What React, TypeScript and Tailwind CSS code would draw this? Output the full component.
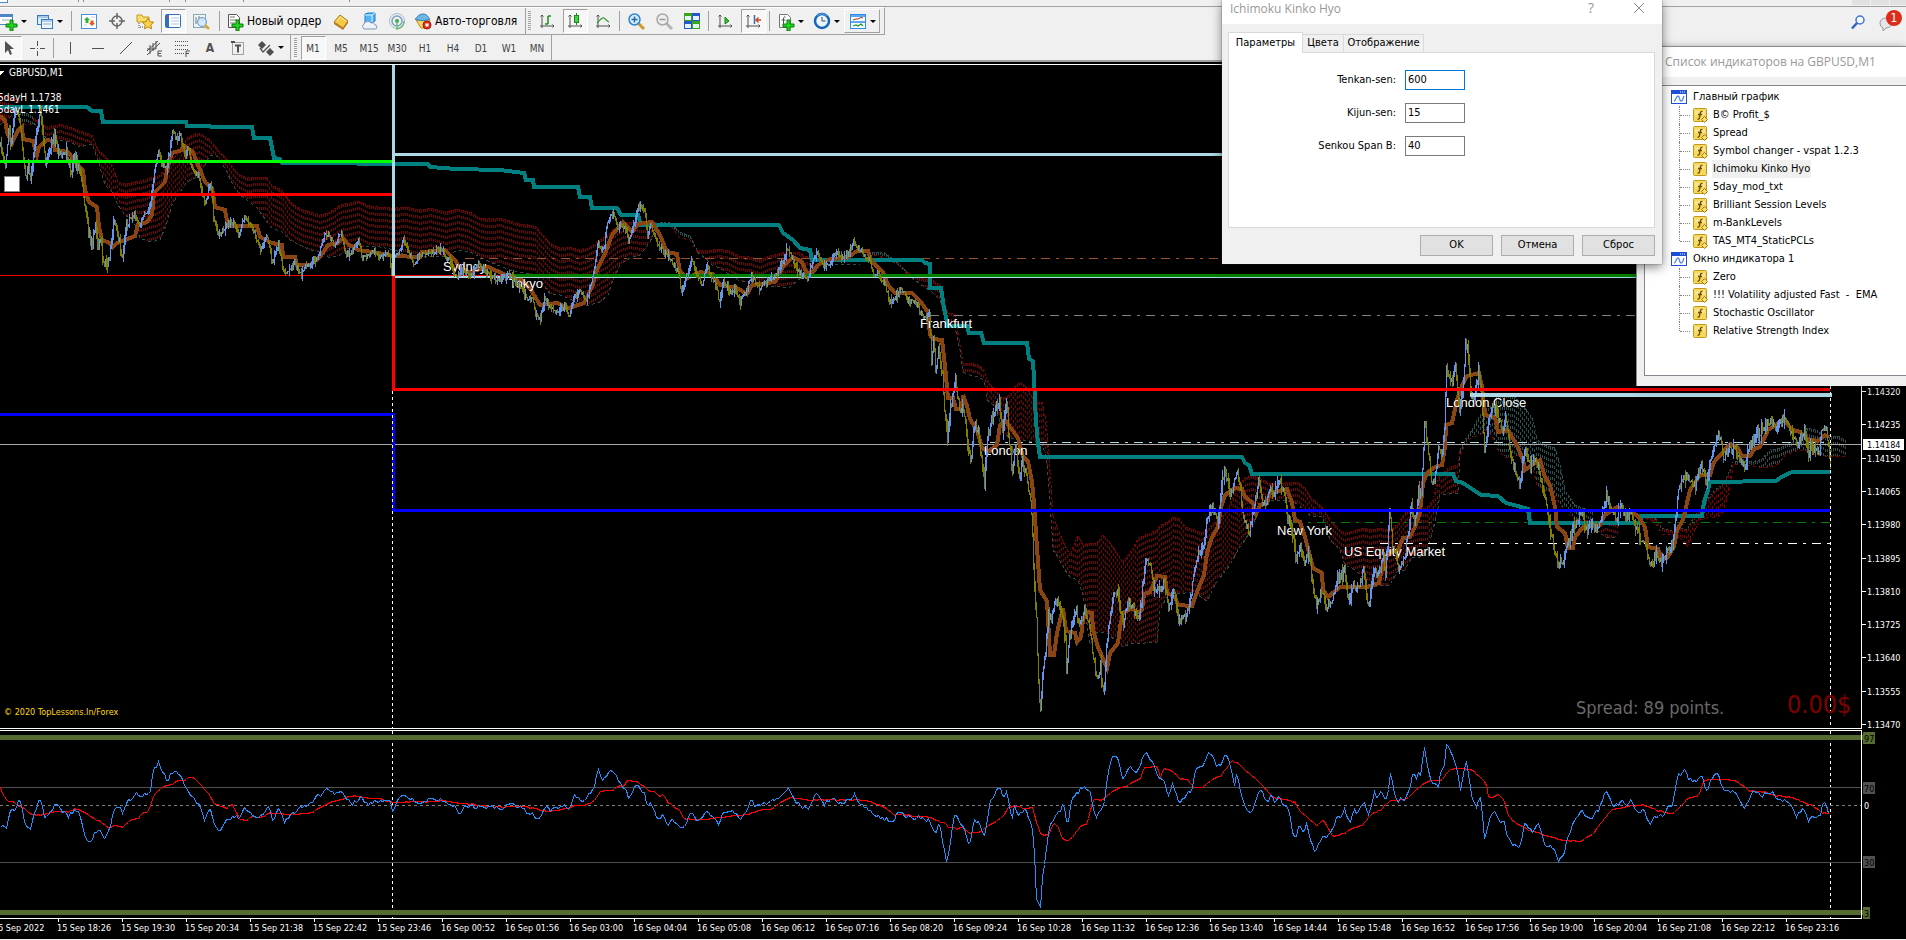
import React from "react";

// ---------------------------------------------------------------- chart data

const TENKAN =
  "0,107 87,107 92,111 101,111 103,122 186,122 187,126 210,126 211,127 252,127 254,138 270,138 274,158 280,159 282,163 428,164 430,167 456,169 500,170 524,173 526,180 533,180 534,187 578,187 580,197 590,197 592,208 617,208 621,215 638,215 641,225 779,225 783,233 793,240 800,248 810,250 812,260 922,260 925,263 930,264 930,288 941,288 944,308 947,322 947,326 967,326 969,333 981,333 984,343 1027,343 1029,359 1033,361 1034,378 1036,422 1038,443 1040,457 1242,457 1245,463 1249,465 1252,474 1453,474 1456,481 1463,483 1481,495 1498,496 1506,503 1518,506 1528,509 1530,523 1640,523 1641,516 1702,516 1704,502 1708,490 1710,482 1776,481 1780,478 1792,472 1831,472";

const KIJUN =
  "0,116 5,120 7,132 12,143 18,130 22,127 23,139 33,141 37,155 39,147 47,140 53,141 55,150 68,152 78,165 83,170 85,190 89,202 97,207 99,227 102,240 110,243 113,247 117,243 125,240 135,236 138,225 147,222 152,215 154,193 165,182 167,170 172,153 182,150 183,145 193,152 200,170 205,182 212,188 215,207 225,210 228,226 257,226 260,237 272,243 282,245 283,257 295,257 297,265 310,265 320,257 328,245 338,243 343,238 348,244 358,250 373,252 393,256 420,257 422,252 445,250 455,260 459,267 469,272 488,267 506,275 522,280 531,290 540,305 557,303 569,308 584,303 592,287 598,267 605,254 608,246 612,235 623,222 632,232 638,224 652,222 660,235 667,252 677,254 680,272 688,278 700,272 713,274 720,285 737,288 747,294 752,285 775,282 783,267 793,257 802,262 807,274 813,272 818,265 830,259 847,258 857,251 868,251 872,262 883,272 888,285 895,293 912,293 920,301 928,312 930,335 933,339 942,340 945,366 948,398 953,398 956,409 962,408 963,395 967,406 970,419 977,430 982,448 988,452 997,445 1000,425 1005,420 1010,427 1018,438 1023,457 1028,461 1032,482 1034,503 1037,548 1040,590 1047,601 1049,636 1050,655 1054,655 1057,633 1063,608 1066,631 1075,633 1077,642 1081,637 1083,620 1087,612 1092,613 1093,630 1098,647 1107,668 1110,653 1118,643 1120,627 1123,613 1132,608 1137,613 1142,610 1144,594 1150,592 1157,576 1165,577 1167,593 1175,597 1178,605 1192,606 1194,600 1199,587 1204,575 1207,553 1212,537 1218,527 1221,507 1225,495 1235,488 1242,489 1245,497 1253,503 1256,514 1260,505 1267,503 1270,493 1287,489 1292,503 1295,520 1300,522 1305,537 1313,568 1322,573 1323,590 1328,597 1340,587 1367,587 1379,583 1382,568 1388,553 1398,550 1403,538 1410,537 1415,527 1420,512 1423,483 1427,473 1435,467 1442,465 1445,447 1446,425 1452,423 1457,400 1463,383 1467,376 1479,373 1482,387 1485,415 1495,417 1498,432 1508,430 1512,437 1517,445 1523,460 1525,470 1532,465 1540,460 1545,477 1550,485 1555,507 1557,527 1565,533 1568,548 1573,548 1575,537 1583,527 1600,525 1605,515 1617,507 1627,512 1637,515 1645,527 1648,547 1658,549 1662,559 1667,558 1674,547 1677,530 1683,520 1690,490 1700,475 1710,475 1714,462 1723,452 1730,444 1737,447 1742,456 1750,456 1754,449 1760,447 1768,430 1783,420 1793,430 1800,432 1807,439 1818,441 1825,435 1829,437";

const PRICE =
  "0,145 2,158 5,165 8,130 11,145 14,112 17,110 19,118 22,150 25,178 28,165 30,178 34,150 37,125 40,115 43,140 45,165 49,150 54,136 58,152 62,158 66,150 70,172 74,158 80,172 83,195 86,215 88,232 92,245 95,220 97,245 100,238 103,262 106,265 109,258 111,235 114,222 118,238 122,255 126,225 130,218 134,212 139,228 143,215 148,212 152,190 154,170 158,150 162,165 166,168 170,145 172,132 177,138 180,133 184,155 188,148 192,168 198,175 202,195 205,203 208,190 211,185 213,215 218,236 222,230 228,222 233,222 238,235 244,215 248,222 254,232 260,250 266,235 272,262 278,243 283,272 290,270 294,262 300,274 306,265 312,262 318,255 324,235 328,232 333,245 341,233 346,255 352,250 358,240 362,258 368,256 374,250 380,257 388,252 391,270 395,255 400,248 403,240 408,252 413,263 420,254 430,252 440,248 450,262 456,278 460,270 470,276 478,263 488,275 500,280 510,274 516,282 522,290 528,300 532,296 535,315 540,318 544,298 550,308 556,312 565,305 569,316 573,298 580,290 586,302 590,285 594,265 598,240 600,250 604,245 607,220 613,212 617,228 624,225 628,240 634,222 638,207 641,205 644,208 647,235 650,222 655,240 661,248 667,255 672,262 678,272 681,292 686,275 691,260 697,275 702,285 706,265 712,280 716,285 719,302 723,280 730,292 735,288 740,302 746,290 751,275 758,288 765,283 773,276 778,270 782,262 787,248 792,258 797,270 802,275 807,280 812,262 817,250 823,265 830,262 836,252 843,258 849,252 853,240 858,248 865,256 870,260 873,275 877,272 884,282 889,302 896,295 901,288 908,300 915,302 920,312 925,318 929,312 931,360 933,335 935,370 938,350 942,372 944,408 947,440 950,408 955,380 958,400 960,410 963,405 967,442 970,460 974,425 978,430 982,465 984,480 987,440 991,420 995,410 999,405 1002,430 1006,400 1008,430 1012,475 1015,445 1019,480 1022,460 1027,480 1031,510 1034,590 1036,620 1038,685 1040,706 1043,670 1046,640 1048,610 1051,620 1055,600 1060,605 1065,640 1066,670 1069,635 1073,618 1076,612 1080,625 1085,608 1089,625 1093,660 1097,680 1100,665 1103,695 1106,650 1109,620 1113,595 1117,593 1120,610 1123,625 1127,600 1132,605 1137,620 1141,600 1144,565 1149,562 1153,585 1160,590 1164,578 1168,610 1173,590 1178,620 1184,618 1190,600 1194,570 1198,555 1203,545 1207,518 1212,505 1217,525 1222,480 1225,470 1230,495 1234,480 1237,470 1241,500 1244,522 1249,530 1254,505 1258,480 1262,505 1266,500 1270,485 1274,495 1278,480 1283,488 1288,520 1292,530 1296,558 1300,545 1304,560 1308,550 1312,580 1316,605 1322,590 1326,605 1331,600 1337,580 1344,570 1348,600 1353,585 1358,590 1363,570 1368,605 1373,570 1378,575 1383,555 1385,580 1389,508 1392,545 1398,565 1403,560 1407,540 1411,505 1414,525 1418,490 1421,495 1424,422 1427,440 1430,475 1434,485 1438,450 1441,455 1444,430 1446,365 1449,375 1452,380 1455,368 1459,410 1463,380 1465,342 1468,355 1470,390 1474,400 1478,372 1481,390 1484,455 1488,420 1493,405 1498,418 1502,430 1505,418 1510,455 1515,470 1519,485 1524,450 1529,465 1536,458 1541,480 1545,500 1550,530 1554,550 1558,562 1563,560 1567,545 1571,535 1576,520 1582,512 1586,530 1590,525 1597,530 1602,510 1606,495 1611,510 1616,520 1621,505 1625,520 1630,512 1636,530 1642,540 1647,555 1650,568 1656,552 1661,565 1667,550 1672,545 1675,520 1678,490 1683,475 1689,480 1695,485 1700,465 1706,480 1711,460 1715,440 1719,435 1723,455 1730,450 1734,445 1739,460 1744,468 1749,445 1754,435 1760,432 1766,425 1771,418 1776,428 1782,420 1787,422 1793,440 1799,442 1804,430 1808,450 1814,445 1819,450 1822,425 1826,425 1828,450 1830,460";

// x, upper edge, lower edge
const CLOUDS: { color: string; edges: [string, string]; data: string }[] = [
  { color: "#800000", edges: ["#800000", "#2f4f4f"], data: "0,95,125 8,97,118 18,100,112" },
  { color: "#2f4f4f", edges: ["#2f4f4f", "#800000"], data: "18,112,120 25,113,124 33,116,124" },
  {
    color: "#800000",
    edges: ["#800000", "#2f4f4f"],
    data: "33,118,123 40,122,128 47,127,140 60,124,140 70,127,142 80,131,147 92,135,144 98,150,160 105,156,185 112,165,192 118,182,205 125,184,215 133,182,220 140,181,238 150,178,242 160,175,240 166,168,225 172,158,205 180,150,192 187,138,182 195,134,178 200,133,175 210,140,155 218,150,157 226,158,170 233,168,185 240,175,195 247,178,200 257,177,208 266,177,220 272,185,228 282,190,232 290,202,240 300,209,245 310,212,250 320,215,252 330,212,258 340,205,255 350,203,247 358,201,247 370,206,246 380,207,247 395,208,250 405,207,255 420,210,256 430,208,257 445,212,256 458,209,250 470,212,252 480,218,257 490,219,262 500,218,266 510,221,270 520,224,272 535,226,275 540,232,280 550,243,294 560,248,295 570,247,299 580,250,305 590,247,305 600,240,302 608,235,295 613,230,280 620,225,265 630,222,258 640,224,255 650,224,242 655,222,230",
  },
  { color: "#2f4f4f", edges: ["#2f4f4f", "#800000"], data: "660,222,223 670,223,225 680,232,238 690,236,240 697,250,252" },
  {
    color: "#800000",
    edges: ["#800000", "#2f4f4f"],
    data: "697,250,252 705,251,258 712,250,265 720,249,268 730,251,275 740,256,281 750,257,283 760,260,283 770,256,286 780,253,287 790,252,287 798,252,280 805,256,275 815,258,266 830,258,264 860,258,264",
  },
  { color: "#2f4f4f", edges: ["#2f4f4f", "#800000"], data: "868,252,255 878,252,256 885,253,258 897,262,264 907,272,274" },
  {
    color: "#800000",
    edges: ["#800000", "#2f4f4f"],
    data: "907,272,274 920,278,284 932,280,292 940,285,300 943,300,310 948,313,322 955,314,328 960,345,350 963,363,372 970,363,375 978,365,377 984,370,380 987,380,400 995,390,406 1003,398,432 1010,395,438 1016,385,438 1021,382,440 1027,388,441 1035,402,441 1042,402,445 1046,420,455 1050,470,500 1053,515,550 1058,530,557 1065,545,570 1070,555,577 1078,535,580 1083,545,595 1090,543,645 1097,543,632 1103,535,632 1108,540,634 1115,550,640 1123,562,647 1132,550,643 1138,538,643 1145,535,643 1157,530,642 1160,525,610 1168,522,595 1173,517,594 1180,519,593 1185,527,593 1195,530,592 1202,533,598 1207,530,601 1215,522,585 1222,518,575 1230,505,565 1238,485,550 1245,478,540 1252,476,528 1260,478,505 1268,483,500 1275,485,500 1285,483,500 1298,482,504 1305,488,512 1311,498,516 1322,507,516 1330,520,540 1340,530,550 1345,533,565 1355,530,570 1363,528,578 1370,530,587 1380,528,586 1390,530,585 1397,525,572 1405,513,570 1412,510,557 1420,508,557 1427,508,550 1433,500,530 1438,480,508 1440,475,494 1450,467,494 1458,465,493 1460,450,455",
  },
  {
    color: "#2f4f4f",
    edges: ["#2f4f4f", "#800000"],
    data: "1460,450,455 1465,440,445 1472,430,437 1480,415,435 1485,410,430 1492,405,435 1498,395,450 1505,395,457 1513,396,457 1520,402,455 1528,412,460 1533,420,468 1537,440,485 1545,445,490 1555,448,495 1560,465,505 1565,490,510 1575,505,520 1583,508,520 1593,512,522",
  },
  { color: "#800000", edges: ["#800000", "#2f4f4f"], data: "1597,526,530 1605,522,537 1610,523,538 1617,525,537" },
  {
    color: "#800000",
    edges: ["#2f4f4f", "#800000"],
    data: "1640,514,516 1655,518,522 1662,528,534 1672,531,535 1680,528,538 1687,530,547 1695,515,530 1700,510,520 1707,500,518 1715,490,517 1722,485,515 1728,475,495 1733,462,468",
  },
  {
    color: "#2f4f4f",
    edges: ["#2f4f4f", "#800000"],
    data: "1735,462,465 1742,459,464 1752,462,466 1762,459,468 1770,450,467 1780,448,463 1785,445,455 1800,440,450 1807,428,452 1817,430,455 1825,437,456 1838,436,456 1845,440,457",
  },
];

// Oscillator samples, split in two blocks with their own horizontal scale
const RSI_LEFT =
  "0,415 3,400 9,418 15,365 20,355 25,368 30,320 33,340 40,400 48,420 55,370 65,320 72,380 80,370 90,338 100,360 112,375 120,358 130,370 138,440 145,460 150,455 155,420 163,425 170,448 178,420 182,385 188,350 195,348 200,370 207,335 212,330 220,305 228,322 235,315 245,300 250,232 259,218 264,240 272,272 280,242 292,248 298,275 305,298 315,325 325,342 333,388 343,355 350,410 357,425 368,392 375,390 382,375 390,385 400,350 412,380 420,382 430,370 437,348 445,388 455,352 463,393 475,375 487,352 500,352 510,330 518,318 527,305 536,295 545,310 557,298 565,330 575,338 583,330 590,320 600,345 615,328 625,335 636,330 641,362 648,325 660,318 675,330 685,345 695,330 715,325 725,332 735,340 742,345 750,375 757,348 770,345 775,355 780,340 790,355 803,345 817,358 835,340 845,352 855,348 860,372 868,365 873,390 880,382 890,350 898,360 910,352 920,342 930,355 938,315 950,330 958,322 970,288 976,235 982,272 988,262 993,242 1003,245 1010,275 1018,290 1027,322 1035,288 1043,285 1053,315 1056,345 1062,330 1070,375 1078,380 1083,370 1088,402 1097,392 1105,395 1112,418 1120,395 1128,362 1138,390 1147,385 1155,360 1162,378 1175,402 1180,365 1195,362 1208,382 1217,368 1222,345 1228,328 1233,348 1243,345 1255,335 1268,325 1278,312 1287,295 1295,325 1307,348 1320,350 1333,305 1345,340 1360,325 1375,340 1395,315 1402,340 1412,350 1425,370 1435,380 1447,388 1455,398 1468,362 1478,375 1490,385 1505,380 1512,388 1517,375 1521,430 1524,400 1527,440 1531,405 1535,400 1541,470 1546,517 1552,450 1557,380 1562,368 1567,400";

const RSI_RIGHT =
  "0,410 5,470 11,515 18,430 27,368 32,400 38,405 47,465 55,390 62,388 71,440 76,390 82,325 86,320 90,300 97,292 102,325 108,300 116,390 120,345 128,375 138,352 145,390 152,440 154,600 158,655 160,632 162,660 166,550 172,480 177,400 185,385 190,365 193,370 197,340 202,355 206,412 214,318 222,310 228,288 235,290 243,300 248,355 254,382 260,358 265,350 270,280 275,220 280,200 288,195 293,250 297,268 303,235 308,230 315,248 322,240 330,190 336,192 343,215 349,240 355,270 363,262 370,320 377,282 382,310 388,332 395,325 402,305 408,300 413,245 420,230 428,225 433,190 440,188 448,225 455,218 462,190 468,210 473,250 477,285 482,245 487,300 492,345 502,370 510,345 518,290 524,310 531,342 537,312 542,338 548,312 556,345 565,355 570,410 576,452 582,400 590,430 595,400 602,458 608,485 614,458 622,440 630,435 638,410 645,378 652,380 656,355 665,400 670,358 678,370 687,335 695,375 705,305 710,330 715,295 722,335 727,300 731,242 736,300 742,335 748,325 755,330 762,290 765,255 770,250 774,270 777,225 780,262 785,168 790,225 798,285 803,275 808,298 813,235 818,225 822,150 828,185 835,220 840,245 844,298 850,240 854,205 858,262 864,335 870,350 876,312 880,380 884,455 889,400 895,365 902,370 908,400 915,395 920,435 927,458 933,465 940,478 948,402 955,410 962,425 970,400 976,430 982,465 990,465 997,480 1004,512 1012,490 1020,430 1028,400 1035,370 1042,355 1050,388 1058,380 1070,355 1080,295 1085,325 1092,345 1100,340 1107,325 1113,345 1120,330 1128,352 1137,365 1142,358 1152,405 1160,375 1175,370 1182,340 1188,345 1193,300 1197,245 1202,255 1207,235 1215,265 1227,275 1235,255 1245,305 1252,260 1262,245 1270,295 1280,302 1290,300 1297,330 1305,355 1312,325 1322,298 1330,318 1340,310 1350,302 1360,328 1375,330 1382,350 1390,378 1400,355 1410,392 1418,375 1428,382 1432,342 1438,340 1443,375";

const SIGNAL_LEFT =
  "0,292 5,315 12,332 22,335 28,345 40,355 47,368 60,375 72,370 90,363 112,365 120,355 135,362 150,382 165,395 175,413 190,405 200,410 210,395 215,385 225,385 232,370 240,365 245,345 252,310 265,290 280,280 290,270 300,270 308,260 318,265 330,290 343,318 350,340 362,348 370,355 378,340 385,365 392,388 400,390 412,380 425,382 440,368 455,370 470,372 500,370 512,365 525,348 545,332 560,325 575,316 590,320 605,325 620,323 630,332 650,337 680,332 700,334 720,330 745,337 775,342 800,348 830,350 855,348 875,355 893,363 910,360 930,352 940,345 960,342 972,325 980,303 990,298 1000,300 1012,285 1018,288 1025,268 1040,275 1050,285 1060,300 1070,305 1077,318 1082,310 1090,335 1100,350 1110,360 1115,382 1130,388 1150,388 1170,382 1190,378 1220,372 1240,360 1260,355 1275,335 1290,322 1315,328 1340,328 1370,328 1400,328 1425,335 1445,352 1460,373 1475,370 1490,378 1515,378 1530,390 1545,400 1560,413 1568,412";

const SIGNAL_RIGHT =
  "0,392 12,410 25,415 35,408 47,428 65,422 80,405 95,388 105,370 110,350 125,345 135,355 150,350 155,390 163,432 175,435 183,400 190,405 198,445 207,452 215,438 228,405 238,400 248,325 262,330 278,305 290,292 305,285 318,270 325,265 330,232 352,228 357,262 362,232 378,245 390,265 402,268 412,292 425,290 440,270 455,255 465,232 473,212 485,220 492,235 505,255 518,275 530,300 540,322 560,328 575,335 585,365 598,385 612,405 622,388 637,438 655,430 670,412 685,405 700,370 715,358 730,330 755,328 765,310 778,290 795,270 812,272 825,240 845,232 862,238 875,258 885,275 890,320 898,322 905,310 915,330 922,375 935,400 960,422 975,430 990,438 1010,450 1040,452 1060,430 1075,390 1090,358 1110,350 1140,342 1165,360 1190,370 1215,322 1230,318 1240,270 1262,265 1290,270 1315,302 1340,305 1355,315 1380,320 1400,335 1420,350 1432,368 1443,368";

const TIMES = [
  "15 Sep 2022", "15 Sep 18:26", "15 Sep 19:30", "15 Sep 20:34", "15 Sep 21:38", "15 Sep 22:42",
  "15 Sep 23:46", "16 Sep 00:52", "16 Sep 01:56", "16 Sep 03:00", "16 Sep 04:04", "16 Sep 05:08",
  "16 Sep 06:12", "16 Sep 07:16", "16 Sep 08:20", "16 Sep 09:24", "16 Sep 10:28", "16 Sep 11:32",
  "16 Sep 12:36", "16 Sep 13:40", "16 Sep 14:44", "16 Sep 15:48", "16 Sep 16:52", "16 Sep 17:56",
  "16 Sep 19:00", "16 Sep 20:04", "16 Sep 21:08", "16 Sep 22:12", "16 Sep 23:16",
];

const PRICES = [
  "1.14320", "1.14235", "1.14150", "1.14065", "1.13980", "1.13895",
  "1.13810", "1.13725", "1.13640", "1.13555", "1.13470",
];

const SESSIONS = [
  { x: 443, y: 271, name: "Sydney" },
  { x: 509, y: 288, name: "Tokyo" },
  { x: 920, y: 328, name: "Frankfurt" },
  { x: 984, y: 455, name: "London" },
  { x: 1277, y: 535, name: "New York" },
  { x: 1344, y: 556, name: "US Equity Market" },
  { x: 1446, y: 407, name: "London Close" },
];

function parse(data: string) {
  return data.split(" ").map((p) => p.split(",").map(Number));
}

function valueAt(points: number[][], x: number, col = 1) {
  for (let i = 1; i < points.length; i++) {
    if (x <= points[i][0]) {
      const a = points[i - 1];
      const b = points[i];
      return a[col] + ((b[col] - a[col]) * (x - a[0])) / (b[0] - a[0]);
    }
  }
  return points[points.length - 1][col];
}

// small repeatable generator so that the bars look the same on every render
function random(seed: number) {
  let s = seed;
  return () => {
    s = (s * 1664525 + 1013904223) % 4294967296;
    return s / 4294967296;
  };
}

function buildBars() {
  const points = parse(PRICE);
  const rnd = random(11);
  let up = "";
  let down = "";
  let prev = points[0][1];
  for (let x = 0; x <= 1830; x++) {
    const wild = x < 130 || x > 930;
    const close = valueAt(points, x) + (rnd() - 0.5) * (wild ? 9 : 5);
    const pad = rnd() * rnd() * (wild ? 9 : 6);
    const top = Math.round(Math.min(prev, close) - pad);
    const bottom = Math.round(Math.max(prev, close) + pad) + 1;
    const bar = `M${x}.5 ${top}V${bottom}`;
    if (close < prev) up += bar;
    else down += bar;
    prev = close;
  }
  return { up, down };
}

// joins both sample blocks into one line with minute by minute wobble
function buildLine(left: string, right: string, wobble: number) {
  const points = [
    ...parse(left).map(([x, y]) => [x * 0.6122, 690 + y / 3]),
    ...parse(right).map(([x, y]) => [940 + x * 0.616, 690 + y / 3]),
  ]
    .filter((p, i, all) => i === 0 || p[0] < 940 || p[0] > all[i - 1][0])
    .sort((a, b) => a[0] - b[0]);
  const rnd = random(5);
  const out: string[] = [];
  for (let x = 0; x <= 1828; x += 2) {
    const y = valueAt(points, x) + (rnd() - 0.5) * wobble;
    out.push(`${x}.5,${Math.round(y)}.5`);
  }
  return out.join(" ");
}

function cloudPath(data: string) {
  const points = parse(data);
  let d = "";
  for (let x = points[0][0]; x <= points[points.length - 1][0]; x += 2) {
    d += `M${x}.5 ${Math.round(valueAt(points, x))}V${Math.round(valueAt(points, x, 2))}`;
  }
  return d;
}

function edge(data: string, col: number) {
  return parse(data).map((p) => `${p[0]},${p[col]}`).join(" ");
}

const BARS = buildBars();
const RSI = buildLine(RSI_LEFT, RSI_RIGHT, 4);
const SIGNAL = buildLine(SIGNAL_LEFT, SIGNAL_RIGHT, 1);

// ---------------------------------------------------------------- charts

const DASH_DOT = "9 6 3 6";

function PriceChart() {
  return (
    <svg viewBox="0 62 1906 667" preserveAspectRatio="xMaxYMin slice" className="block h-[667px] w-full" shapeRendering="crispEdges" fill="none">
      <path d="M0 64.5H1906" stroke="#fff" />

      {CLOUDS.map((c, i) => (
        <g key={i}>
          <path d={cloudPath(c.data)} stroke={c.color} strokeDasharray="3 3" />
          <polyline points={edge(c.data, 1)} stroke={c.edges[0]} strokeDasharray="2 2" />
          <polyline points={edge(c.data, 2)} stroke={c.edges[1]} strokeDasharray="3 3" />
        </g>
      ))}

      {/* session and bank levels */}
      <path d="M465 258.5H1906" stroke="#a0522d" strokeDasharray={DASH_DOT} />
      <path d="M930 315.5H1906" stroke="#808080" strokeDasharray={DASH_DOT} />
      <path d="M990 442.5H1830" stroke="#add8e6" strokeDasharray={DASH_DOT} />
      <path d="M1293 522.5H1830" stroke="#008000" strokeDasharray={DASH_DOT} />
      <path d="M1380 543.5H1830" stroke="#fff" strokeDasharray={DASH_DOT} />
      <path d="M0 444.5H1861" stroke="#a9a9a9" />
      <polyline points={TENKAN} stroke="#008080" strokeWidth="4" />
      <polyline points={KIJUN} stroke="#8b4513" strokeWidth="4" />

      <g className="fill-white font-['Liberation_Sans',Arial,sans-serif] text-[13px]">
        {SESSIONS.map((s) => (
          <text key={s.name} x={s.x} y={s.y}>
            {s.name}
          </text>
        ))}
      </g>

      <path d="M0 275.5H510" stroke="#ff0000" />
      <path d="M392.5 194V275" stroke="#ff0000" />
      <path d="M393 277H1830" stroke="#add8e6" strokeWidth="2" />
      <path d="M510 275.5H1830" stroke="#008000" strokeWidth="3" />
      <path d={BARS.up} stroke="#6495ed" />
      <path d={BARS.down} stroke="#808000" />

      <path d="M0 161.5H393" stroke="#00ff00" strokeWidth="3" />
      <path d="M0 194.5H392" stroke="#ff0000" strokeWidth="3" />
      <path d="M0 414.5H393.5V510.5H1830" stroke="#0000ff" strokeWidth="3" />
      <path d="M393.5 276V389.5H1830" stroke="#ff0000" strokeWidth="3" />
      <path d="M393.5 65V276M393 154.5H1830" stroke="#add8e6" strokeWidth="3" />
      <path d="M1470 394.5H1832" stroke="#add8e6" strokeWidth="4" />
      <path d="M392.5 391V728M1830.5 386V728" stroke="#fff" strokeDasharray="3 3" />

      <rect x="4.5" y="176.5" width="15" height="15" fill="#fff" stroke="#808080" />
      <path d="M-3 71H4L0 75Z" fill="#fff" />
      <g className="fill-white text-[10px]">
        <text x="9" y="76">GBPUSD,M1</text>
        <text x="-2" y="101">5dayH 1.1738</text>
        <text x="-2" y="113">5dayL 1.1461</text>
      </g>
      <text x="4" y="715" className="fill-[#ffd700] text-[9px]">© 2020 TopLessons.In/Forex</text>
      <text x="1576" y="714" className="fill-[#696969] text-[18px]">Spread: 89 points.</text>
      <text x="1787" y="713" className="fill-[#800000] text-[25px]">0.00$</text>

      {/* price scale */}
      <path d="M1861.5 64V728.5H0" stroke="#fff" />
      <g className="fill-white text-[9px]">
        {PRICES.map((p, i) => (
          <g key={p}>
            <path d={`M1862 ${Math.round(391 + i * 33.3)}.5h4`} stroke="#fff" />
            <text x="1867" y={Math.round(395 + i * 33.3)}>{p}</text>
          </g>
        ))}
        <rect x="1863" y="439" width="41" height="11" fill="#fff" />
        <text x="1867" y="448" className="fill-black">1.14184</text>
      </g>
    </svg>
  );
}

const LEVELS = [
  { y: 738, text: "97", width: 12, box: "#556b2f", ink: "#000" },
  { y: 788, text: "70", width: 12, box: "#505050", ink: "#000" },
  { y: 805, text: "0", width: 6, box: "#000", ink: "#fff" },
  { y: 862, text: "30", width: 12, box: "#505050", ink: "#000" },
  { y: 913, text: "3", width: 7, box: "#556b2f", ink: "#000" },
];

function OscillatorChart() {
  return (
    <svg viewBox="0 729 1906 190" preserveAspectRatio="xMaxYMin slice" className="block h-[190px] w-full" shapeRendering="crispEdges" fill="none">
      <path d="M392.5 731V918M1830.5 731V918" stroke="#fff" strokeDasharray="3 3" />
      <path d="M0 787.5H1862M0 862.5H1862" stroke="#505050" />
      <path d="M0 805.5H1862" stroke="#808080" strokeDasharray="3 3" />
      <polyline points={SIGNAL} stroke="#ff0000" />
      <polyline points={RSI} stroke="#1e90ff" />
      <path d="M0 737.5H1866M0 912.5H1866" stroke="#556b2f" strokeWidth="5" />
      <path d="M0 730.5H1861.5V918.5H0" stroke="#fff" />
      <g className="text-[9px]">
        {LEVELS.map((l) => (
          <g key={l.text}>
            <rect x="1863" y={l.y - 6} width={l.width} height="12" fill={l.box} />
            <text x="1864" y={l.y + 4} fill={l.ink}>{l.text}</text>
          </g>
        ))}
      </g>
    </svg>
  );
}

function TimeAxis() {
  return (
    <div className="overflow-hidden border-b border-[#ededed] bg-black text-[9px] text-white">
      <ul className="-ml-[7px] flex h-5">
        {TIMES.map((t) => (
          <li key={t} className="w-16 shrink-0 whitespace-nowrap">
            <span className="ml-px block h-[3px] w-px bg-white" />
            <span className="block leading-3">{t}</span>
          </li>
        ))}
      </ul>
    </div>
  );
}

// ---------------------------------------------------------------- icons

const axes = <path d="M5 4v13M3 15h14M3.5 5.5 5 4l1.5 1.5M15.5 13.5 17 15l-1.5 1.5" stroke="#505050" fill="none" />;
const plus = <path d="M11 9h3v4h4v3h-4v4h-3v-4H7v-3h4z" fill="#1fd51f" stroke="#0a7a0a" />;

const ICONS: Record<string, React.ReactNode> = {
  newChart: (
    <>
      <rect x="0.5" y="3.5" width="13" height="10" fill="#fff" stroke="#4a86c8" />
      <path d="M1 5h12" stroke="#4a86c8" strokeWidth="2" />
      <path d="M3 9h7" stroke="#8ab" />
      {plus}
    </>
  ),
  profiles: (
    <>
      <rect x="2.5" y="4.5" width="11" height="9" fill="#dcebfa" stroke="#3a78c0" />
      <rect x="6.5" y="8.5" width="11" height="9" fill="#eef5fc" stroke="#3a78c0" />
      <path d="M3 6h10M7 10h10" stroke="#6ea3dc" />
      <path d="M8 13h8" stroke="#8ab" />
    </>
  ),
  market: (
    <>
      <rect x="2.5" y="3.5" width="15" height="14" fill="#fff" stroke="#4a90d9" />
      <path d="m8 6 3 3H9.5v3h-3V9H5z" fill="#2db52d" />
      <path d="m13 15-3-3h1.5V9.5h3V12H16z" fill="#e2571c" />
      <path d="M5 14h3M12 6h4" stroke="#bcd" />
    </>
  ),
  target: (
    <g fill="none" stroke="#666" strokeWidth="1.5">
      <circle cx="10" cy="10" r="5" />
      <path d="M10 2v6M10 12v6M2 10h6M12 10h6" />
    </g>
  ),
  favourites: (
    <>
      <path d="M2 4h5l1 2h6v5H2z" fill="#f8dc6a" stroke="#c8981c" />
      <path d="M4 12v5M5 16h4" stroke="#555" strokeDasharray="1 1" />
      <path d="m13 7 1.8 3.7 4 .5-3 2.7.8 4-3.6-2-3.6 2 .8-4-3-2.7 4-.5z" fill="#fbd34a" stroke="#b98913" />
    </>
  ),
  navigator: (
    <>
      <rect x="2.5" y="3.5" width="15" height="13" rx="1" fill="#fff" stroke="#2f6fc0" />
      <path d="M4.500 4v12" stroke="#2f6fc0" strokeWidth="3" />
      <path d="M8 7h8M8 10h8M8 13h8" stroke="#a8c4e4" />
      <path d="M4 6h2" stroke="#e33" />
    </>
  ),
  tester: (
    <>
      <rect x="2.5" y="3.5" width="12" height="13" fill="#eef3f8" stroke="#8aa" />
      <path d="M5 6v7M8 5v6M11 6v4" stroke="#777" />
      <circle cx="11" cy="11" r="4.5" fill="#cfe6fa" fillOpacity="0.8" stroke="#5a9ad0" />
      <path d="m14 14 4 4" stroke="#d9a83a" strokeWidth="2.5" />
    </>
  ),
  order: (
    <>
      <path d="M3.5 3.5h8l3 3v10h-11z" fill="#fff" stroke="#555" />
      <path d="M5 6h5M5 9h7M5 12h5" stroke="#777" />
      {plus}
    </>
  ),
  book: (
    <>
      <path d="m3 11 6-7 8 6-5 7z" fill="#f5c945" stroke="#a9781c" />
      <path d="m3 11 9 6 5-7v2l-5 7-9-6z" fill="#b87a1e" />
      <path d="m6 10 3.5-4 5 4" stroke="#fff0a8" fill="none" />
    </>
  ),
  vps: (
    <>
      <path d="m6 3 3-1h7v8l-3 2H6z" fill="#55b4f5" stroke="#1b7cd0" />
      <path d="M6 4h7v7M13 4l3-2" stroke="#d8efff" fill="none" />
      <path d="M5 18a3 3 0 0 1 0-5 4 4 0 0 1 7-1 3 3 0 0 1 4 2 2 2 0 0 1 0 4z" fill="#eef3fa" stroke="#7d97b8" />
    </>
  ),
  signal: (
    <g fill="none">
      <circle cx="10" cy="10" r="7.5" stroke="#a9bccb" />
      <circle cx="10" cy="10" r="5" stroke="#7c9fc6" strokeWidth="1.5" />
      <circle cx="10" cy="10" r="2" fill="#3aa050" />
      <path d="M10 10v8c4-1 7-3 7-8" stroke="#6cbc70" strokeWidth="1.5" />
    </g>
  ),
  auto: (
    <>
      <path d="m3 9 14 0-5 8H8z" fill="#f7d560" stroke="#b98a1c" />
      <path d="M2 8c2-1 3-5 8-5s5 4 7 5c-4 2-11 2-15 0z" fill="#6db6e4" stroke="#2e7fb5" />
      <circle cx="14" cy="14" r="4" fill="#e0301c" stroke="#a01808" />
      <rect x="12.5" y="12.5" width="3" height="3" fill="#fff" />
    </>
  ),
  bars: (
    <>
      {axes}
      <path d="M11 5v8M11 5h3M8 13h3" stroke="#1c8a1c" strokeWidth="1.5" fill="none" />
    </>
  ),
  candles: (
    <>
      {axes}
      <path d="M11.5 2v12" stroke="#1c8a1c" />
      <rect x="9.5" y="4.5" width="4" height="7" fill="#3ed43e" stroke="#1c8a1c" />
    </>
  ),
  line: (
    <>
      {axes}
      <path d="M4 12c3-3 5-6 7-5s2 3 5 4" stroke="#2f9a2f" fill="none" strokeWidth="1.3" />
    </>
  ),
  zoomIn: (
    <>
      <path d="m12 12 6 6" stroke="#c99a2a" strokeWidth="3" />
      <circle cx="8.5" cy="8.5" r="5.5" fill="#d8eefc" stroke="#2f86cc" strokeWidth="1.5" />
      <path d="M8.5 5.5v6M5.5 8.5h6" stroke="#2566a8" strokeWidth="1.5" />
    </>
  ),
  zoomOut: (
    <>
      <path d="m12 12 6 6" stroke="#b4b4b4" strokeWidth="3" />
      <circle cx="8.5" cy="8.5" r="5.5" fill="#eee" stroke="#a8a8a8" strokeWidth="1.5" />
      <path d="M5.5 8.5h6" stroke="#999" strokeWidth="1.5" />
    </>
  ),
  tiles: (
    <>
      <path d="M2 2h8v8H2zM10 10h8v8h-8z" fill="#3aa51c" />
      <path d="M10 2h8v8h-8zM2 10h8v8H2z" fill="#2458c8" />
      <path d="M3 5h6v4H3zM11 5h6v4h-6zM3 13h6v4H3zM11 13h6v4h-6z" fill="#e8f2fb" />
    </>
  ),
  scroll: (
    <>
      {axes}
      <path d="m10 6 4 4-4 3z" fill="#2fc22f" stroke="#178217" />
    </>
  ),
  shift: (
    <>
      {axes}
      <path d="M11.5 4v9" stroke="#2f6fa8" strokeWidth="1.5" />
      <path d="M18 9h-5M15.5 6.5 13 9l2.5 2.5" stroke="#c8401c" fill="none" strokeWidth="1.3" />
    </>
  ),
  indicators: (
    <>
      <path d="M3.5 3.5h8l3 3v10h-11z" fill="#fff" stroke="#777" />
      <path d="M9.5 6C8 5.5 7.5 6.5 7.5 8v6M5.5 9h4" stroke="#555" fill="none" />
      {plus}
    </>
  ),
  clock: (
    <>
      <circle cx="10" cy="10" r="7" fill="#eaf4fd" stroke="#1766b5" strokeWidth="2.5" />
      <path d="M10 6v4h3.5" stroke="#444" fill="none" />
      <path d="M5 5a7 7 0 0 1 10 0" stroke="#5ab0ef" fill="none" />
    </>
  ),
  template: (
    <>
      <rect x="2.5" y="3.5" width="15" height="14" fill="#fff" stroke="#2b8cec" />
      <path d="M3 5h14M3 11h14" stroke="#2b8cec" strokeWidth="1.5" />
      <path d="m5 9 3-1 2 0 3-1.5 2 .5" stroke="#a0301c" fill="none" />
      <path d="m5 15 3-1 2 1 3-2 2 2" stroke="#1c9a2c" fill="none" strokeWidth="1.3" />
    </>
  ),
  cursor: <path d="M6 3v12l3-3 2 5 2-1-2-5h4z" fill="#505050" />,
  cross: <path d="M10.5 3v5M10.5 13v5M3 10.5h5M13 10.5h5M10 10.5h1" stroke="#505050" />,
  vline: <path d="M10.5 4v12" stroke="#505050" />,
  hline: <path d="M4 10.5h12" stroke="#505050" />,
  trend: <path d="M4 16 16 4" stroke="#505050" />,
  channel: (
    <>
      <path d="m3 13 11-10M3 17 16 5M6 7v9M9 5v8M12 3v8M3 11h9" stroke="#505050" />
      <path d="M18 13h-4v5h4M14 15.5h3" stroke="#505050" fill="none" />
    </>
  ),
  fibo: (
    <>
      <path d="M3 3.5h14M3 7.5h14M3 11.5h14M3 15.5h9" stroke="#505050" strokeDasharray="1 1" />
      <path d="M18 13h-4v6M14 15.5h3" stroke="#505050" fill="none" />
    </>
  ),
  label: (
    <>
      <rect x="4.5" y="4.5" width="11" height="12" fill="none" stroke="#505050" strokeDasharray="1 1" />
      <path d="M3 4h4" stroke="#505050" strokeWidth="2" />
      <path d="M7 7.5h6M10 7.5v7" stroke="#505050" strokeWidth="2" />
    </>
  ),
  arrows: (
    <>
      <path d="m6 3 4 4-4 4-4-4zM14 10l4 4-4 4-4-4z" fill="#505050" />
      <path d="m4 10 3 4 7-7" stroke="#505050" fill="none" strokeWidth="1.3" />
    </>
  ),
};

function Icon({ name }: { name: string }) {
  return (
    <svg viewBox="0 0 20 20" className="size-5 shrink-0" aria-hidden="true">
      {ICONS[name]}
    </svg>
  );
}

// ---------------------------------------------------------------- toolbar

const PRESSED = "border border-[#a0a0a0] border-r-white border-b-white bg-[#f7f7f7]";

interface ToolProps {
  icon: string;
  label: string;
  pressed?: boolean;
}

function Tool({ icon, label, pressed }: ToolProps) {
  return (
    <button aria-label={label} className="flex h-6 w-7 shrink-0 items-center justify-center">
      <span className={`flex h-6 w-[25px] items-center justify-center ${pressed ? PRESSED : ""}`}>
        <Icon name={icon} />
      </span>
    </button>
  );
}

function DropTool({ icon, label, pressed }: ToolProps) {
  return (
    <button
      aria-label={label}
      className={`flex h-6 w-9 shrink-0 items-center ${pressed ? "border border-white border-r-[#a0a0a0] border-b-[#a0a0a0] pl-[3px]" : "pl-1"}`}
    >
      <Icon name={icon} />
      <span className="ml-[2px] border-x-[3px] border-t-[3px] border-x-transparent border-t-black" />
    </button>
  );
}

function Divider({ className = "w-[5px]" }: { className?: string }) {
  return (
    <span className={`flex h-5 shrink-0 justify-center ${className}`}>
      <span className="w-px bg-[#a0a0a0]" />
    </span>
  );
}

function Grip() {
  return <span className="mx-[2px] h-5 w-[3px] shrink-0 bg-[repeating-linear-gradient(to_bottom,#a0a0a0_0_1px,#f0f0f0_1px_2px)]" />;
}

const PERIODS = ["M1", "M5", "M15", "M30", "H1", "H4", "D1", "W1", "MN"];

function Toolbars() {
  return (
    <header className="bg-[#f0f0f0]">
      {/* lower edge of the menu bar */}
      <div className="flex h-[7px] justify-between overflow-hidden border-b border-[#a0a0a0]">
        <svg viewBox="0 0 400 6" className="h-[6px] w-[400px]" shapeRendering="crispEdges">
          <rect x="-1" y="-8" width="8" height="10" fill="#fff" stroke="#4a86c8" />
          <path d="M78.5 0v2M83.5 0v2M169.5 0v2M185.5 0v2M243.5 0v2M349.5 0v2" stroke="#888" />
        </svg>
        <div className="flex gap-px">
          <span className="h-[5px] w-[18px] bg-[#e1e1e1]" />
          <span className="h-[5px] w-[18px] bg-[#e1e1e1]" />
          <span className="h-[5px] w-4 bg-[#e1e1e1]" />
        </div>
      </div>

      <div className="flex h-7 items-start justify-between">
        <nav aria-label="Standard" className="flex h-7 items-center border-t border-t-white border-r border-b border-[#a0a0a0]">
          <div className="-ml-[5px] flex items-center">
            <DropTool icon="newChart" label="New chart" />
            <DropTool icon="profiles" label="Profiles" />
            <Divider className="w-2" />
            <Tool icon="market" label="Market watch" />
            <Tool icon="target" label="Data window" />
            <Tool icon="favourites" label="Favourites" />
            <Tool icon="navigator" label="Navigator" pressed />
            <Tool icon="tester" label="Strategy tester" />
            <Divider className="w-2" />
            <button className="flex h-6 w-[104px] shrink-0 items-center gap-[2px] pl-[2px] text-[12px] whitespace-nowrap text-black">
              <Icon name="order" />
              Новый ордер
            </button>
            <Tool icon="book" label="MetaEditor" />
            <Tool icon="vps" label="VPS" />
            <Tool icon="signal" label="Signals" />
            <button className="flex h-6 w-[114px] shrink-0 items-center gap-[2px] pl-[2px] text-[12px] whitespace-nowrap text-black">
              <Icon name="auto" />
              Авто-торговля
            </button>
          </div>
          <span className="h-full w-px bg-[#a0a0a0]" />
          <Grip />
          <Tool icon="bars" label="Bar chart" />
          <Tool icon="candles" label="Candlesticks" pressed />
          <Tool icon="line" label="Line chart" />
          <Divider />
          <Tool icon="zoomIn" label="Zoom in" />
          <Tool icon="zoomOut" label="Zoom out" />
          <Tool icon="tiles" label="Tile windows" />
          <Divider />
          <Tool icon="scroll" label="Auto scroll" />
          <Tool icon="shift" label="Chart shift" pressed />
          <Divider />
          <DropTool icon="indicators" label="Indicators" />
          <DropTool icon="clock" label="Periods" />
          <DropTool icon="template" label="Templates" pressed />
          <span className="w-1" />
        </nav>
        <div className="flex gap-3 pt-[6px] pr-1">
          <button aria-label="Search">
            <svg viewBox="0 0 16 16" className="size-4" fill="none">
              <circle cx="10" cy="5" r="4" fill="#f4f8fe" stroke="#4076cc" strokeWidth="1.5" />
              <path d="m7 8-5 5.5" stroke="#2c62c0" strokeWidth="2.5" />
            </svg>
          </button>
          <button aria-label="Notifications" className="relative h-5 w-6">
            <svg viewBox="0 0 24 20" className="absolute top-0 left-0 h-5 w-6">
              <path d="M2 10a6 5 0 1 1 6 5l-3 3v-3a5 5 0 0 1-3-5z" fill="#e6e6ea" stroke="#999" />
            </svg>
            <span className="absolute -top-[3px] right-0 flex size-4 items-center justify-center rounded-full bg-[#dd2c1c] text-[12px] text-white">
              1
            </span>
          </button>
        </div>
      </div>

      <div className="flex h-[27px] items-stretch border-b-2 border-[#a0a0a0]">
        <nav aria-label="Line studies" className="-ml-[5px] flex items-center border-r border-[#a0a0a0] pr-[2px]">
          <Tool icon="cursor" label="Cursor" pressed />
          <Tool icon="cross" label="Crosshair" />
          <Divider />
          <Tool icon="vline" label="Vertical line" />
          <Tool icon="hline" label="Horizontal line" />
          <Tool icon="trend" label="Trend line" />
          <Tool icon="channel" label="Channel" />
          <Tool icon="fibo" label="Fibonacci" />
          <button className="h-6 w-7 text-[12px] font-bold text-[#505050]">A</button>
          <Tool icon="label" label="Text label" />
          <DropTool icon="arrows" label="Arrows" />
        </nav>
        <nav aria-label="Periods" className="flex items-center border-r border-[#a0a0a0] pl-px">
          <Grip />
          {PERIODS.map((p) => (
            <button key={p} className="flex h-6 w-7 items-center justify-center text-[10px] text-[#404040]">
              <span className={`flex h-6 w-[25px] items-center justify-center pt-px ${p === "M1" ? PRESSED : ""}`}>{p}</span>
            </button>
          ))}
        </nav>
      </div>
    </header>
  );
}

// ---------------------------------------------------------------- windows

const TREE = [
  {
    name: "Главный график",
    items: [
      { name: "B© Profit_$", custom: true },
      { name: "Spread", custom: true },
      { name: "Symbol changer - vspat 1.2.3", custom: true },
      { name: "Ichimoku Kinko Hyo", selected: true },
      { name: "5day_mod_txt", custom: true },
      { name: "Brilliant Session Levels", custom: true },
      { name: "m-BankLevels", custom: true },
      { name: "TAS_MT4_StaticPCLs", custom: true },
    ],
  },
  {
    name: "Окно индикатора 1",
    items: [
      { name: "Zero", custom: true },
      { name: "!!! Volatility adjusted Fast  -  EMA", custom: true },
      { name: "Stochastic Oscillator" },
      { name: "Relative Strength Index" },
    ],
  },
];

function WindowIcon() {
  return (
    <svg viewBox="0 0 16 14" className="h-[14px] w-4 shrink-0" aria-hidden="true">
      <rect x="0.5" y="0.5" width="15" height="13" fill="#fff" stroke="#1c50d8" />
      <path d="M0 2h16" stroke="#1c50d8" strokeWidth="4" />
      <path d="M9 2h1M11 2h1M13 2h1" stroke="#fff" />
      <path d="M3 11c2 0 2-5 4-5s1 5 3 5 2-3 3-5" fill="none" stroke="#5a86dc" strokeWidth="1.3" />
    </svg>
  );
}

function FunctionIcon({ custom }: { custom?: boolean }) {
  return (
    <svg viewBox="0 0 15 15" className="size-[15px] shrink-0" aria-hidden="true">
      <rect x="0.5" y="0.5" width="13" height="13" rx="1" fill="#f6d95c" stroke="#c09a20" />
      <path d="M2 3h10v4H2z" fill="#fff" fillOpacity="0.3" />
      <path d="M9.5 3.5C8 2.8 7.5 4 7.2 6L6.5 9.5C6.2 11 5.5 11.5 4.5 11M5 6.5h4" fill="none" stroke="#6a4c08" strokeWidth="1.3" />
      {custom && <path d="m11.5 8.5 3 3-3 3-3-3z" fill="#f8df6a" stroke="#a07a10" />}
    </svg>
  );
}

function IndicatorList() {
  return (
    <section className="absolute top-[46px] right-0 w-[270px] border-t border-l border-[#8c8c8c] bg-[#f0f0f0] pb-[10px] pl-[7px] shadow-[0_2px_8px_rgba(0,0,0,0.45)]">
      <h2 className="-ml-[7px] h-[30px] bg-white pl-[28px] font-['Open_Sans','Noto_Sans',sans-serif] text-[12px] leading-[30px] text-[#999]">
        Список индикаторов на GBPUSD,M1
      </h2>
      <div className="mt-2 h-[291px] border border-r-0 border-[#828790] bg-white pt-[2px] pl-[26px] text-[11px] text-black">
        {TREE.map((group) => (
          <div key={group.name}>
            <div className="flex h-[18px] items-center gap-[6px]">
              <WindowIcon />
              <span>{group.name}</span>
            </div>
            <ul className="ml-2">
              {group.items.map((item) => (
                <li key={item.name} className="group flex h-[18px] items-center">
                  <span className="h-[18px] w-px border-l border-dotted border-[#808080] group-last:h-[9px] group-last:self-start" />
                  <span className="mr-[3px] w-[10px] border-t border-dotted border-[#808080]" />
                  <FunctionIcon custom={item.custom} />
                  <span className={`ml-1 px-px leading-[18px] whitespace-pre ${item.selected ? "bg-[#f0f0f0]" : ""}`}>{item.name}</span>
                </li>
              ))}
            </ul>
          </div>
        ))}
      </div>
    </section>
  );
}

const FIELDS = [
  { id: "tenkan", label: "Tenkan-sen:", value: "600", focused: true },
  { id: "kijun", label: "Kijun-sen:", value: "15" },
  { id: "senkou", label: "Senkou Span B:", value: "40" },
];

function ParamsDialog() {
  return (
    <section
      role="dialog"
      aria-labelledby="dialog-title"
      className="absolute top-0 right-[244px] w-[440px] bg-[#f0f0f0] text-[11px] text-black shadow-[0_3px_10px_rgba(0,0,0,0.5),0_0_1px_#555]"
    >
      <div className="flex h-6 items-start justify-between bg-white pr-[18px] pl-2 font-['Open_Sans','Noto_Sans',sans-serif] text-[#999]">
        <h2 id="dialog-title" className="text-[12px] leading-[18px]">Ichimoku Kinko Hyo</h2>
        <div className="flex items-start gap-10">
          <button aria-label="Help" className="text-[14px] leading-4">?</button>
          <button aria-label="Close" className="flex h-4 items-center">
            <svg viewBox="0 0 10 10" className="size-[10px]">
              <path d="m0 0 10 10M10 0 0 10" stroke="#888" />
            </svg>
          </button>
        </div>
      </div>

      <div className="px-[7px] pt-2 pb-2">
        <div className="-ml-px flex items-end" role="tablist">
          <button role="tab" aria-selected="true" className="relative -mb-px h-[21px] w-[75px] border border-b-0 border-[#d9d9d9] bg-white">
            Параметры
          </button>
          <button role="tab" className="h-[18px] w-[41px] border border-b-0 border-l-0 border-[#d9d9d9]">
            Цвета
          </button>
          <button role="tab" className="h-[18px] w-[80px] border border-b-0 border-l-0 border-[#d9d9d9]">
            Отображение
          </button>
        </div>
        <form className="-ml-px flex h-[176px] flex-col gap-[13px] border border-[#d9d9d9] bg-white pt-[17px]">
          {FIELDS.map((f) => (
            <div key={f.id} className="flex h-5 items-center gap-[9px]">
              <label htmlFor={f.id} className="w-[167px] text-right">
                {f.label}
              </label>
              <input
                id={f.id}
                defaultValue={f.value}
                className={`h-5 w-[60px] border bg-white px-[2px] pb-[2px] outline-none ${f.focused ? "border-[#0078d7]" : "border-[#7a7a7a]"}`}
              />
            </div>
          ))}
        </form>
        <div className="mt-[7px] flex justify-end gap-2">
          {["OK", "Отмена", "Сброс"].map((b) => (
            <button key={b} className="h-[21px] w-[73px] border border-[#adadad] bg-[#e1e1e1]">
              {b}
            </button>
          ))}
        </div>
      </div>
    </section>
  );
}

export default function App() {
  return (
    <div className="relative flex min-h-screen flex-col overflow-hidden bg-black font-['DejaVu_Sans_Condensed','DejaVu_Sans',sans-serif]">
      <Toolbars />
      <main>
        <PriceChart />
        <OscillatorChart />
        <TimeAxis />
      </main>
      <IndicatorList />
      <ParamsDialog />
    </div>
  );
}
